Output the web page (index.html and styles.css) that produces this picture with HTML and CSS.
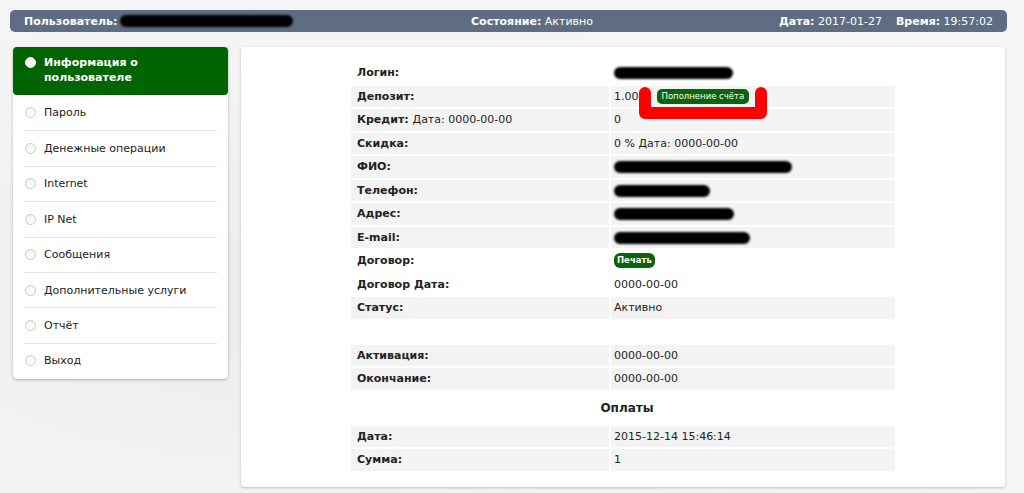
FILE: index.html
```html
<!DOCTYPE html>
<html lang="ru">
<head>
<meta charset="utf-8">
<title>Информация о пользователе</title>
<link rel="stylesheet" href="styles.css">
</head>
<body>
<div class="topbar">
  <div class="tb-left"><b>Пользователь:</b><span class="redact tb-redact"></span></div>
  <div class="tb-center"><b>Состояние:</b> Активно</div>
  <div class="tb-right"><span><b>Дата:</b> 2017-01-27</span><span><b>Время:</b> 19:57:02</span></div>
</div>
<div class="layout">
  <nav class="menu">
    <div class="menu-item active"><span class="radio"></span><span class="menu-text">Информация о пользователе</span></div>
    <div class="menu-item"><span class="radio"></span><span class="menu-text">Пароль</span></div>
    <div class="menu-item"><span class="radio"></span><span class="menu-text">Денежные операции</span></div>
    <div class="menu-item"><span class="radio"></span><span class="menu-text">Internet</span></div>
    <div class="menu-item"><span class="radio"></span><span class="menu-text">IP Net</span></div>
    <div class="menu-item"><span class="radio"></span><span class="menu-text">Сообщения</span></div>
    <div class="menu-item"><span class="radio"></span><span class="menu-text">Дополнительные услуги</span></div>
    <div class="menu-item"><span class="radio"></span><span class="menu-text">Отчёт</span></div>
    <div class="menu-item"><span class="radio"></span><span class="menu-text">Выход</span></div>
  </nav>
  <main class="panel">
    <table class="info">
      <tr class="white"><th>Логин:</th><td><span class="redact" style="width:119px"></span></td></tr>
      <tr><th>Депозит:</th><td>1.00<span class="mark-wrap"><svg class="mark" width="134" height="38" viewBox="0 0 134 38"><path d="M8 6 V26 H124 V6" fill="none" stroke="#ff0000" stroke-width="12" stroke-linecap="round" stroke-linejoin="round"/></svg><span class="btn">Пополнение счёта</span></span></td></tr>
      <tr><th>Кредит: <span class="normal">Дата: 0000-00-00</span></th><td>0</td></tr>
      <tr><th>Скидка:</th><td>0 % Дата: 0000-00-00</td></tr>
      <tr><th>ФИО:</th><td><span class="redact" style="width:178px"></span></td></tr>
      <tr><th>Телефон:</th><td><span class="redact" style="width:96px"></span></td></tr>
      <tr><th>Адрес:</th><td><span class="redact" style="width:120px"></span></td></tr>
      <tr><th>E-mail:</th><td><span class="redact" style="width:136px"></span></td></tr>
      <tr class="white"><th>Договор:</th><td><span class="btn btn-print">Печать</span></td></tr>
      <tr class="white"><th>Договор Дата:</th><td>0000-00-00</td></tr>
      <tr><th>Статус:</th><td>Активно</td></tr>
      <tr class="white empty"><th></th><td></td></tr>
      <tr><th>Активация:</th><td>0000-00-00</td></tr>
      <tr><th>Окончание:</th><td>0000-00-00</td></tr>
      <tr class="white caption"><td colspan="2">Оплаты</td></tr>
      <tr><th>Дата:</th><td>2015-12-14 15:46:14</td></tr>
      <tr><th>Сумма:</th><td>1</td></tr>
    </table>
  </main>
</div>
</body>
</html>
```

FILE: styles.css
```css
html, body {
  margin: 0;
  padding: 0;
}
body {
  width: 1024px;
  height: 493px;
  overflow: hidden;
  background: #f3f3f4;
  background-image: radial-gradient(ellipse at 30% 60%, #ebebec 0%, #f4f4f5 55%, #f6f6f7 100%);
  font-family: "DejaVu Sans", Verdana, sans-serif;
  font-size: 11px;
  color: #222;
}
.topbar {
  margin: 10px 17px 0 10px;
  height: 22px;
  background: #5e6d82;
  border-radius: 5px;
  color: #fff;
  display: grid;
  grid-template-columns: 447px auto 1fr;
  align-items: center;
  padding: 0 14px;
  font-size: 11px;
}
.topbar b {
  font-weight: bold;
}
.tb-left {
  display: flex;
  align-items: center;
}
.tb-redact {
  width: 173px;
  height: 11px;
  margin-left: 3px;
}
.tb-right {
  display: flex;
  justify-content: flex-end;
  gap: 14px;
}
.layout {
  display: grid;
  grid-template-columns: 215px 764px;
  gap: 13px;
  margin: 15px 0 0 13px;
  align-items: start;
}
.menu {
  background: #fff;
  border-radius: 4px;
  box-shadow: 0 1px 3px rgba(0,0,0,0.28);
  padding-bottom: 1px;
}
.menu-item {
  display: flex;
  align-items: center;
  height: 35.4px;
  margin: 0 11px;
  border-top: 1px solid #e4e4e4;
  box-sizing: border-box;
  color: #222;
}
.menu-item:nth-child(2) {
  border-top: none;
}
.menu-item.active {
  margin: 0;
  height: 48px;
  padding: 0 11px;
  border-top: none;
  background: #006400;
  border-radius: 4px;
  color: #fff;
  font-weight: bold;
  align-items: flex-start;
  padding-top: 8px;
  line-height: 15px;
}
.radio {
  flex: none;
  width: 9px;
  height: 9px;
  border: 1px solid #c9c9c9;
  border-radius: 50%;
  background: linear-gradient(#f4f4f4, #fff);
  margin: 0 8px 0 1px;
}
.active .radio {
  background: #fff;
  border-color: #fff;
  margin-top: 2px;
}
.menu-text {
  line-height: 15px;
}
.active .menu-text {
  width: 130px;
}
.panel {
  background: #fff;
  border-radius: 4px;
  box-shadow: 0 1px 3px rgba(0,0,0,0.22);
  height: 440px;
  box-sizing: border-box;
  padding-top: 14px;
}
.info {
  width: 544px;
  margin: 0 auto;
  border-collapse: collapse;
  table-layout: fixed;
}
.info tr {
  background: #f3f3f3;
  height: 23.5px;
}
.info tr.white {
  background: #fff;
}
.info th, .info td {
  padding: 0 4px 0 3px;
  text-align: left;
  vertical-align: middle;
  border-bottom: 2px solid #fff;
  white-space: nowrap;
}
.info th {
  width: 248px;
  padding-left: 6px;
  border-right: 2px solid #fff;
  font-weight: bold;
}
.info th .normal {
  font-weight: normal;
}
.info tr.empty {
  height: 24px;
}
.info tr.caption {
  height: 34px;
}
.info tr.caption td {
  text-align: center;
  font-weight: bold;
  font-size: 12px;
  padding-left: 12px;
}
.redact {
  display: inline-block;
  height: 12px;
  background: #000;
  border-radius: 7px;
  filter: blur(0.9px);
  vertical-align: middle;
}
.mark-wrap {
  position: relative;
  display: inline-block;
  margin-left: 18px;
}
.mark {
  position: absolute;
  left: -20px;
  top: -2px;
  filter: blur(0.7px);
}
.btn {
  position: relative;
  display: inline-block;
  background: #0a640a;
  color: #fff;
  font-size: 8.5px;
  line-height: 15px;
  padding: 0 5px;
  border-radius: 5px;
  vertical-align: middle;
}
.btn-print {
  padding: 0 3px;
  font-weight: bold;
  border-radius: 6px;
}
```
